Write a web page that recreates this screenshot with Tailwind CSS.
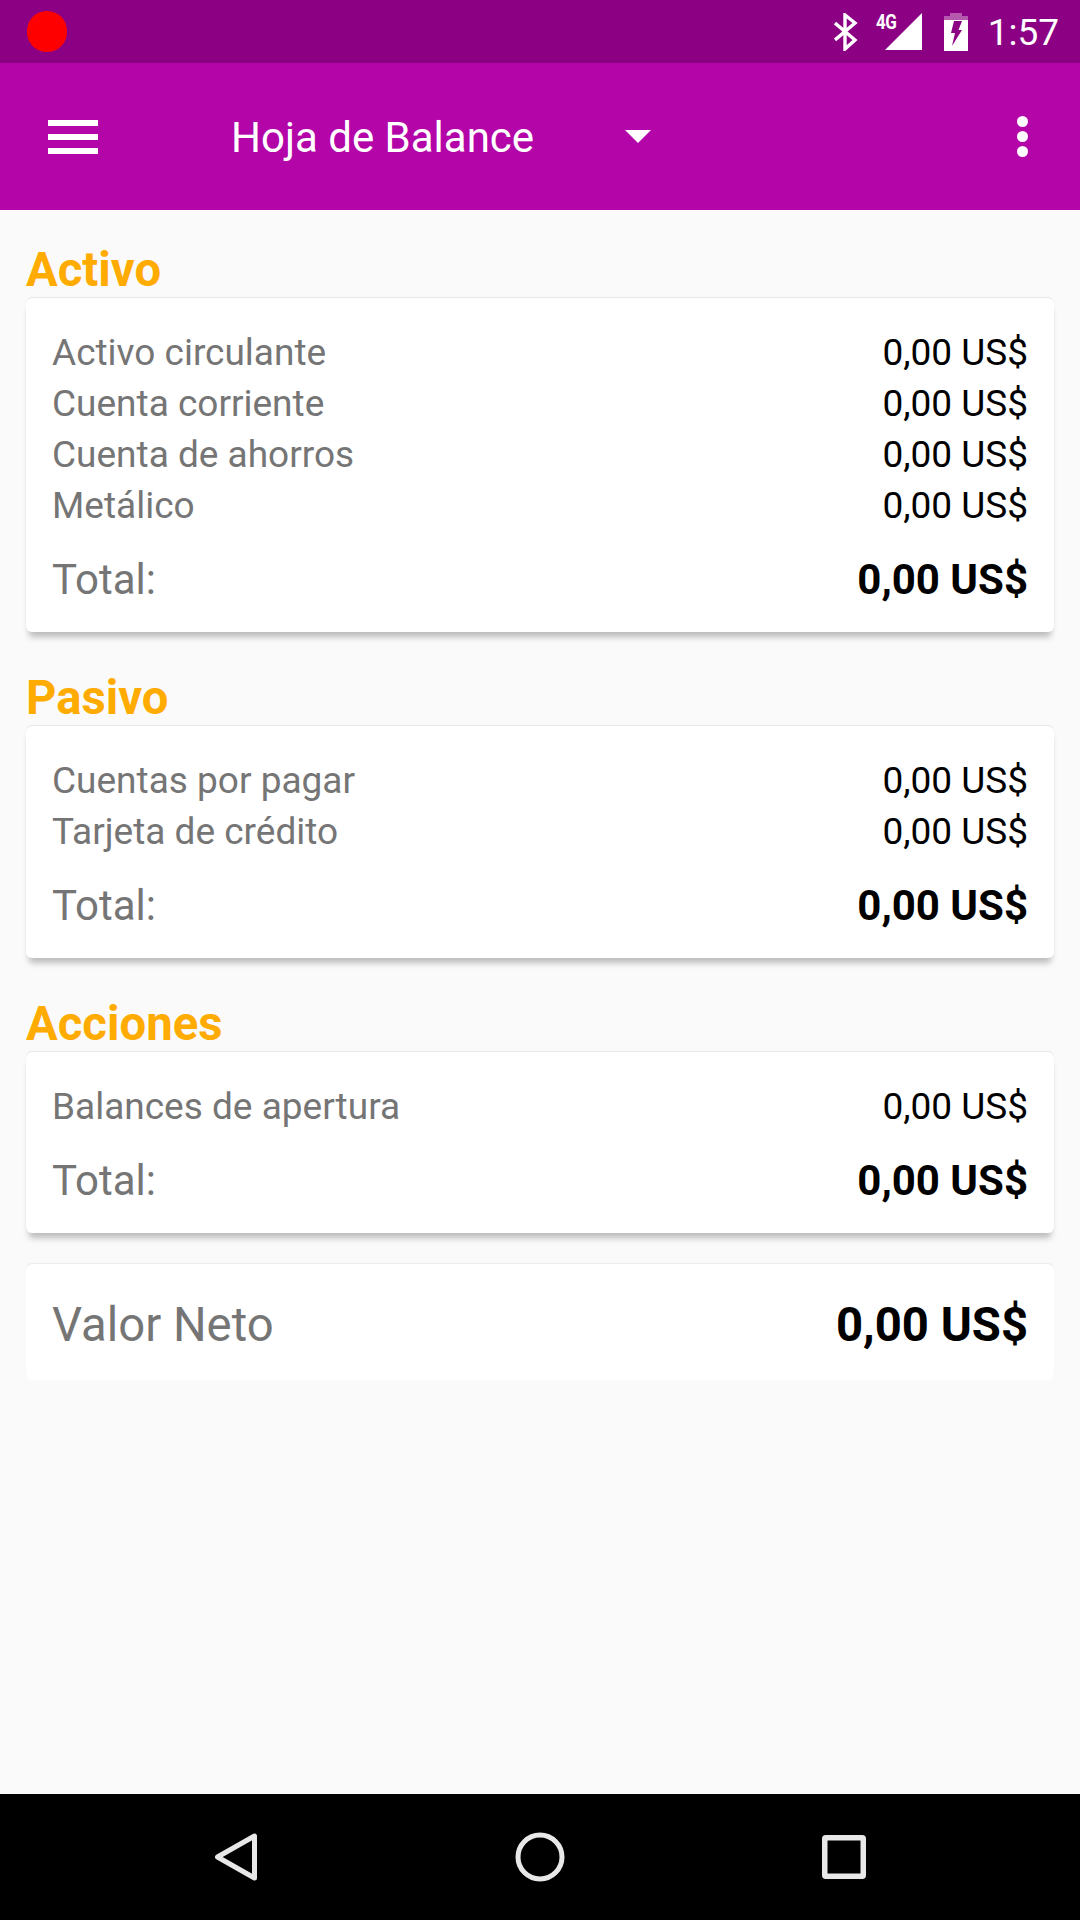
<!DOCTYPE html>
<html lang="es">
<head>
  <meta charset="UTF-8">
  <title>Hoja de Balance</title>
  <script src="https://cdn.jsdelivr.net/npm/@tailwindcss/browser@4"></script>
</head>
<body class="font-[Roboto,sans-serif] bg-[#fafafa]">
<div class="w-[1080px] h-[1920px] flex flex-col overflow-hidden">
  <!-- status bar -->
  <div class="h-[63px] bg-[#8c0083] flex items-center pl-[27px] pr-[21px] text-white">
    <div class="w-[40px] h-[41px] rounded-full bg-[#ff0000]"></div>
    <div class="ml-auto flex items-center">
      <svg class="w-[24px] h-[38px]" viewBox="0 0 24 38" fill="none" stroke="#fff" stroke-width="3.4"><path d="M1 27 L21 10 L11 2 V36 L21 27 L1 10"/></svg>
      <div class="relative w-[46px] h-[38px] ml-[18px]">
        <svg class="absolute inset-0 w-[46px] h-[38px]" viewBox="0 0 46 38"><path d="M46 0 V37 H9 Z" fill="#fff"/></svg>
        <span class="absolute left-0 top-[-1px] text-[20px] leading-[20px] font-bold tracking-[-0.5px] scale-x-[0.85] origin-left text-white">4G</span>
      </div>
      <svg class="w-[24px] h-[38px] ml-[22px]" viewBox="0 0 24 38"><path d="M6 0 H18 V3 H24 V38 H0 V3 H6 Z" fill="#fff" fill-opacity=".35"/><path d="M0 7 H24 V38 H0 Z" fill="#fff"/><path d="M10 8 H18 L14.500 17 H18 L8 33 L11 20 H7 Z" fill="#8c0083"/></svg>
      <span class="ml-[20px] text-[37px] leading-[38px] font-normal relative top-[1px]">1:57</span>
    </div>
  </div>
  <!-- toolbar -->
  <div class="h-[147px] bg-[#b305a8] flex items-center text-white relative">
    <div class="ml-[48px] w-[50px] flex flex-col gap-[8px]">
      <div class="h-[6px] bg-white"></div>
      <div class="h-[6px] bg-white"></div>
      <div class="h-[6px] bg-white"></div>
    </div>
    <span class="ml-[133px] text-[42px] leading-[48px] relative top-[1px]">Hoja de Balance</span>
    <div class="ml-[91px] w-0 h-0 border-l-[13px] border-r-[13px] border-t-[13px] border-l-transparent border-r-transparent border-t-white"></div>
    <div class="ml-auto mr-[52px] flex flex-col gap-[4px]">
      <div class="w-[11px] h-[11px] rounded-full bg-white"></div>
      <div class="w-[11px] h-[11px] rounded-full bg-white"></div>
      <div class="w-[11px] h-[11px] rounded-full bg-white"></div>
    </div>
  </div>
  <!-- content -->
  <div class="flex-1 px-[26px] pt-[30px]">
    <h2 class="text-[47.250px] leading-[58px] font-bold text-[#ffab00] relative top-[1px]">Activo</h2>
    <div class="bg-white rounded-[6px] shadow-[0_-1px_2px_-1px_rgba(0,0,0,0.25),0_8px_6px_-3px_rgba(0,0,0,0.25)] px-[26px] pt-[29px] pb-[23px]">
      <div class="flex justify-between h-[51px] items-center text-[37px]"><span class="text-[#757575]">Activo circulante</span><span class="text-black">0,00 US$</span></div>
      <div class="flex justify-between h-[51px] items-center text-[37px]"><span class="text-[#757575]">Cuenta corriente</span><span class="text-black">0,00 US$</span></div>
      <div class="flex justify-between h-[51px] items-center text-[37px]"><span class="text-[#757575]">Cuenta de ahorros</span><span class="text-black">0,00 US$</span></div>
      <div class="flex justify-between h-[51px] items-center text-[37px]"><span class="text-[#757575]">Metálico</span><span class="text-black">0,00 US$</span></div>
      <div class="flex justify-between h-[60px] mt-[18px] items-center"><span class="text-[#757575] text-[42px]">Total:</span><span class="text-black text-[42px] font-bold">0,00 US$</span></div>
    </div>

    <h2 class="mt-[36px] text-[47.250px] leading-[58px] font-bold text-[#ffab00] relative top-[1px]">Pasivo</h2>
    <div class="bg-white rounded-[6px] shadow-[0_-1px_2px_-1px_rgba(0,0,0,0.25),0_8px_6px_-3px_rgba(0,0,0,0.25)] px-[26px] pt-[29px] pb-[23px]">
      <div class="flex justify-between h-[51px] items-center text-[37px]"><span class="text-[#757575]">Cuentas por pagar</span><span class="text-black">0,00 US$</span></div>
      <div class="flex justify-between h-[51px] items-center text-[37px]"><span class="text-[#757575]">Tarjeta de crédito</span><span class="text-black">0,00 US$</span></div>
      <div class="flex justify-between h-[60px] mt-[18px] items-center"><span class="text-[#757575] text-[42px]">Total:</span><span class="text-black text-[42px] font-bold">0,00 US$</span></div>
    </div>

    <h2 class="mt-[36px] text-[47.250px] leading-[58px] font-bold text-[#ffab00] relative top-[1px]">Acciones</h2>
    <div class="bg-white rounded-[6px] shadow-[0_-1px_2px_-1px_rgba(0,0,0,0.25),0_8px_6px_-3px_rgba(0,0,0,0.25)] px-[26px] pt-[29px] pb-[23px]">
      <div class="flex justify-between h-[51px] items-center text-[37px]"><span class="text-[#757575]">Balances de apertura</span><span class="text-black">0,00 US$</span></div>
      <div class="flex justify-between h-[60px] mt-[18px] items-center"><span class="text-[#757575] text-[42px]">Total:</span><span class="text-black text-[42px] font-bold">0,00 US$</span></div>
    </div>

    <div class="mt-[31px] h-[116px] pt-[6px] bg-white rounded-[6px] shadow-[0_-1px_2px_-1px_rgba(0,0,0,0.2)] px-[26px] flex justify-between items-center">
      <span class="text-[#757575] text-[47.250px]">Valor Neto</span><span class="text-black text-[47.250px] font-bold">0,00 US$</span>
    </div>
  </div>
  <!-- nav bar -->
  <div class="h-[126px] bg-black flex items-center relative">
    <svg class="absolute left-[214px] top-[38px] w-[44px] h-[50px]" viewBox="0 0 44 50" fill="none" stroke="#e8e8e8" stroke-width="5" stroke-linejoin="round"><path d="M40.500 4 V46 L3.500 25 Z"/></svg>
    <svg class="absolute left-[515px] top-[38px] w-[50px] h-[50px]" viewBox="0 0 50 50" fill="none" stroke="#e8e8e8" stroke-width="5"><circle cx="25" cy="25" r="22"/></svg>
    <svg class="absolute left-[822px] top-[41px] w-[44px] h-[44px]" viewBox="0 0 44 44" fill="none" stroke="#e8e8e8" stroke-width="5.500" stroke-linejoin="round"><rect x="2.750" y="2.750" width="38.500" height="38.500" rx="1"/></svg>
  </div>
</div>
</body>
</html>
